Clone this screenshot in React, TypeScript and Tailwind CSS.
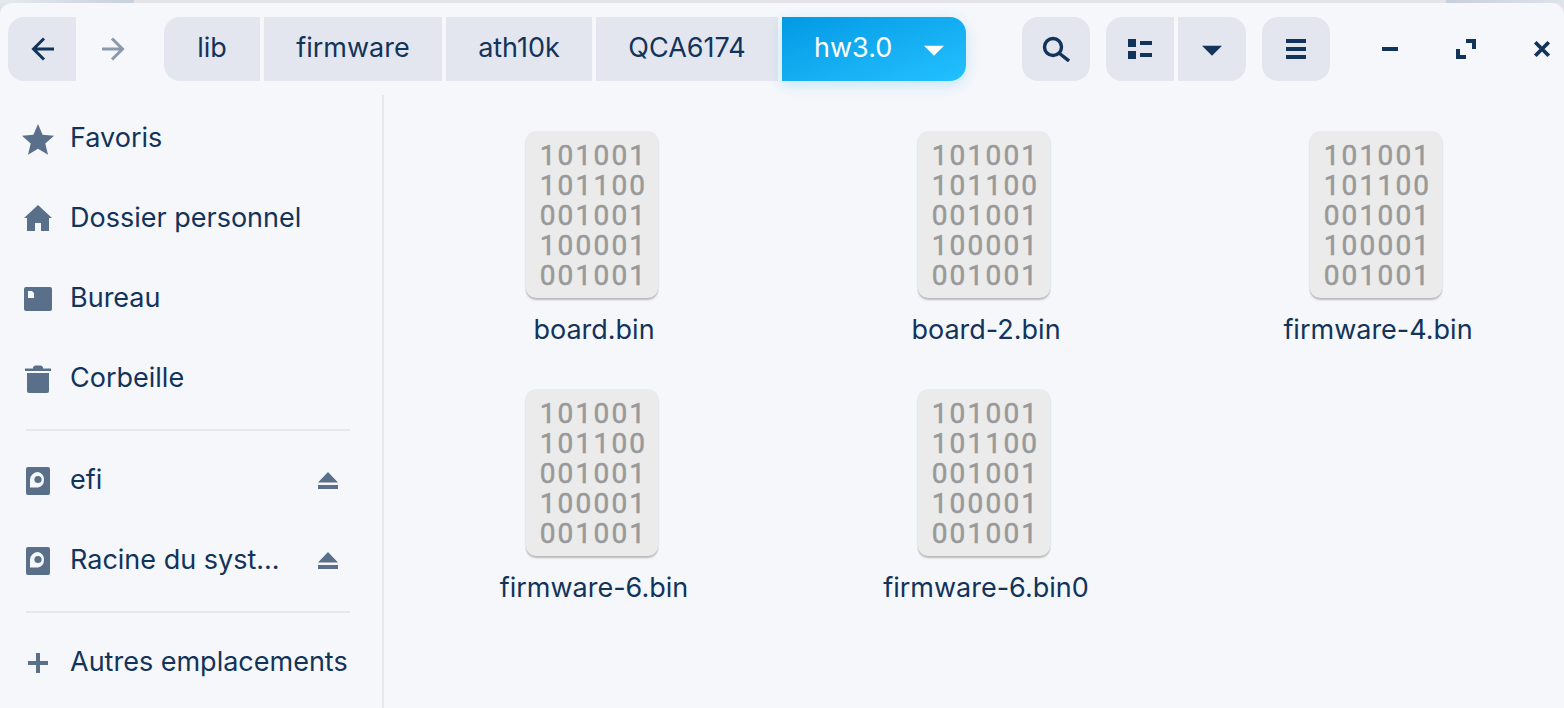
import { ReactNode } from "react";

const navy = "#12335a";
const slate = "#5a6f89";

function Crumb({ label, className = "" }: { label: string; className?: string }) {
  return <div className={`h-16 pb-[2px] flex items-center justify-center bg-[#e3e6ee] ${className}`}>{label}</div>;
}

function ToolButton({ children, className = "" }: { children: ReactNode; className?: string }) {
  return <div className={`h-16 w-[68px] flex items-center justify-center bg-[#e3e6ee] ${className}`}>{children}</div>;
}

function Caret({ color }: { color: string }) {
  return (
    <svg width="20" height="20" viewBox="0 0 24 24">
      <path d="M0 7h24l-12 12z" fill={color} />
    </svg>
  );
}

function DiskIcon() {
  return (
    <svg width="24" height="28" viewBox="0 0 24 28">
      <rect x="0" y="0" width="24" height="28" rx="2" fill={slate} />
      <path d="M12 5a8 8 0 0 1 0 15.500H4V12.500a8 8 0 0 1 8-7.500z" fill="#f5f7fb" />
      <circle cx="12" cy="12.500" r="3.600" fill={slate} />
    </svg>
  );
}

function EjectIcon() {
  return (
    <svg width="20" height="20" viewBox="0 0 20 20">
      <path d="M10 0l10 10.500H0z" fill={slate} />
      <rect x="0" y="13" width="20" height="4" fill={slate} />
    </svg>
  );
}

function SideRow({ icon, label, right, className = "" }: { icon: ReactNode; label: string; right?: ReactNode; className?: string }) {
  return (
    <div className={`flex items-center h-20 ${className}`}>
      <div className="w-[70px] pl-[6px] mt-[2px] flex items-center justify-center shrink-0">{icon}</div>
      <span className="whitespace-nowrap mt-[1px]">{label}</span>
      {right && <div className="ml-auto mr-[44px] mt-[4px] flex">{right}</div>}
    </div>
  );
}

function BinFile({ name }: { name: string }) {
  return (
    <div className="h-[258px] flex flex-col items-center">
      <div
        className="w-[132px] h-[167px] rounded-[10px] bg-[#ebebeb] shadow-[0_2px_2px_#b9b9b9] flex flex-col items-center pt-[10px] pl-[3px] text-[28px] leading-[30px] tracking-[2.200px] font-normal text-[#999999] [-webkit-text-stroke:0.5px_#999999]"
        style={{ fontFamily: "Roboto, sans-serif" }}
      >
        <div>101001</div>
        <div>101100</div>
        <div>001001</div>
        <div>100001</div>
        <div>001001</div>
      </div>
      <div className="mt-[16px] ml-1 leading-[32px]">{name}</div>
    </div>
  );
}

export default function App() {
  return (
    <div
      className="w-[1564px] h-[708px] overflow-hidden bg-[#e3e3e8] text-[27px] text-[#12335a]"
      style={{ fontFamily: "Inter, sans-serif" }}
    >
      <div className="h-[3px] flex">
        <div className="w-[134px] bg-gradient-to-r from-[#e6eaf0] to-[#c8d0dc]" />
        <div className="flex-1" />
        <div className="w-[118px] bg-gradient-to-r from-[#c8d0dc] to-[#dfe3ea]" />
      </div>
      <div className="h-[705px] rounded-tl-[12px] rounded-tr-[12px] bg-[#f5f7fb] flex flex-col">
        {/* header bar */}
        <div className="h-[92px] flex items-start pt-[14px] pl-2 shrink-0">
          <ToolButton className="rounded-l-[16px]">
            <svg width="24" height="24" viewBox="0 0 24 24">
              <path d="M24 12H4M14 1.500L3.500 12 14 22.500" fill="none" stroke={navy} strokeWidth="3" />
            </svg>
          </ToolButton>
          <div className="h-16 w-[76px] flex items-center justify-center">
            <svg width="24" height="24" viewBox="0 0 24 24">
              <path d="M0 12h20M10 1.500L20.500 12 10 22.500" fill="none" stroke="#8a99ab" strokeWidth="3" />
            </svg>
          </div>
          <div className="ml-[12px] flex gap-1">
            <Crumb label="lib" className="w-[96px] rounded-l-[16px]" />
            <Crumb label="firmware" className="w-[178px]" />
            <Crumb label="ath10k" className="w-[146px]" />
            <Crumb label="QCA6174" className="w-[182px]" />
            <div className="h-16 w-[184px] rounded-r-[16px] flex items-center pl-[32px] text-white bg-gradient-to-br from-[#0299e4] to-[#22c1ff] shadow-[0_4px_14px_rgba(30,170,240,0.22)]">
              <span className="mb-[2px]">hw3.0</span>
              <div className="ml-[32px] mt-[1px]">
                <Caret color="#ffffff" />
              </div>
            </div>
          </div>
          <ToolButton className="ml-[56px] rounded-[16px]">
            <svg width="28" height="26" viewBox="0 0 28 26">
              <circle cx="11" cy="11" r="8.500" fill="none" stroke={navy} strokeWidth="3.400" />
              <path d="M17 17l10 8" stroke={navy} strokeWidth="3.400" />
            </svg>
          </ToolButton>
          <ToolButton className="ml-4 rounded-l-[16px]">
            <svg width="24" height="20" viewBox="0 0 24 20">
              <rect x="0" y="0" width="8" height="8" fill={navy} />
              <rect x="0" y="12" width="8" height="8" fill={navy} />
              <rect x="12" y="2" width="12" height="4" fill={navy} />
              <rect x="12" y="14" width="12" height="4" fill={navy} />
            </svg>
          </ToolButton>
          <ToolButton className="ml-1 rounded-r-[16px]">
            <div className="mt-[1px]">
              <Caret color={navy} />
            </div>
          </ToolButton>
          <ToolButton className="ml-4 rounded-[16px]">
            <svg width="20" height="20" viewBox="0 0 20 20">
              <rect width="20" height="4" y="0" fill={navy} />
              <rect width="20" height="4" y="8" fill={navy} />
              <rect width="20" height="4" y="16" fill={navy} />
            </svg>
          </ToolButton>
          <div className="ml-[36px] h-16 w-[48px] flex items-center justify-center">
            <div className="w-4 h-1 bg-[#12335a]" />
          </div>
          <div className="ml-[28px] h-16 w-[48px] flex items-center justify-center">
            <svg width="20" height="20" viewBox="0 0 20 20">
              <path d="M10 0h10v10h-4V4h-6zM0 10h4v6h6v4H0z" fill={navy} />
            </svg>
          </div>
          <div className="ml-[30px] h-16 w-[44px] flex items-center justify-center">
            <svg width="18" height="18" viewBox="0 0 24 24">
              <path d="M3 3l18 18M21 3L3 21" stroke={navy} strokeWidth="5" />
            </svg>
          </div>
        </div>

        <div className="flex flex-1 min-h-0">
          {/* sidebar */}
          <div className="w-[384px] shrink-0 border-r-2 border-[#e6e8ee] flex flex-col pt-[3px]">
            <SideRow
              label="Favoris"
              icon={
                <svg width="32" height="32" viewBox="0 0 32 32">
                  <path d="M16 1l4.600 10.800 11.400 1-8.700 7.600 2.700 11.300L16 25.700 6 31.700l2.700-11.300L0 12.800l11.400-1z" fill={slate} />
                </svg>
              }
            />
            <SideRow
              label="Dossier personnel"
              icon={
                <svg width="28" height="26" viewBox="0 0 28 26" className="-mt-[2px]">
                  <path d="M14 0l14 13h-3v13H17v-8h-6v8H3V13H0z" fill={slate} />
                </svg>
              }
            />
            <SideRow
              label="Bureau"
              icon={
                <svg width="28" height="24" viewBox="0 0 28 24">
                  <rect width="28" height="24" rx="2" fill={slate} />
                  <path d="M4 4h4l2 2v5H4z" fill="#f5f7fb" />
                </svg>
              }
            />
            <SideRow
              label="Corbeille"
              icon={
                <svg width="26" height="28" viewBox="0 0 26 28">
                  <path d="M0 3.500h8V2l2-1.500h6L18 2v1.500h8V6H0z" fill={slate} />
                  <path d="M2 8h22v18a2 2 0 0 1-2 2H4a2 2 0 0 1-2-2z" fill={slate} />
                </svg>
              }
            />
            <div className="h-[2px] ml-[26px] mr-[32px] mt-[11px] bg-[#e6e8ee]" />
            <SideRow label="efi" icon={<DiskIcon />} right={<EjectIcon />} className="mt-[9px]" />
            <SideRow label="Racine du syst..." icon={<DiskIcon />} right={<EjectIcon />} />
            <div className="h-[2px] ml-[26px] mr-[32px] mt-[11px] bg-[#e6e8ee]" />
            <SideRow
              label="Autres emplacements"
              className="mt-[9px]"
              icon={
                <svg width="20" height="20" viewBox="0 0 20 20">
                  <path d="M8 0h4v8h8v4h-8v8H8v-8H0V8h8z" fill={slate} />
                </svg>
              }
            />
          </div>

          {/* file grid */}
          <div className="flex-1 pl-[12px] pt-[36px] grid grid-cols-[repeat(3,392px)] content-start">
            <BinFile name="board.bin" />
            <BinFile name="board-2.bin" />
            <BinFile name="firmware-4.bin" />
            <BinFile name="firmware-6.bin" />
            <BinFile name="firmware-6.bin0" />
          </div>
        </div>
      </div>
    </div>
  );
}
